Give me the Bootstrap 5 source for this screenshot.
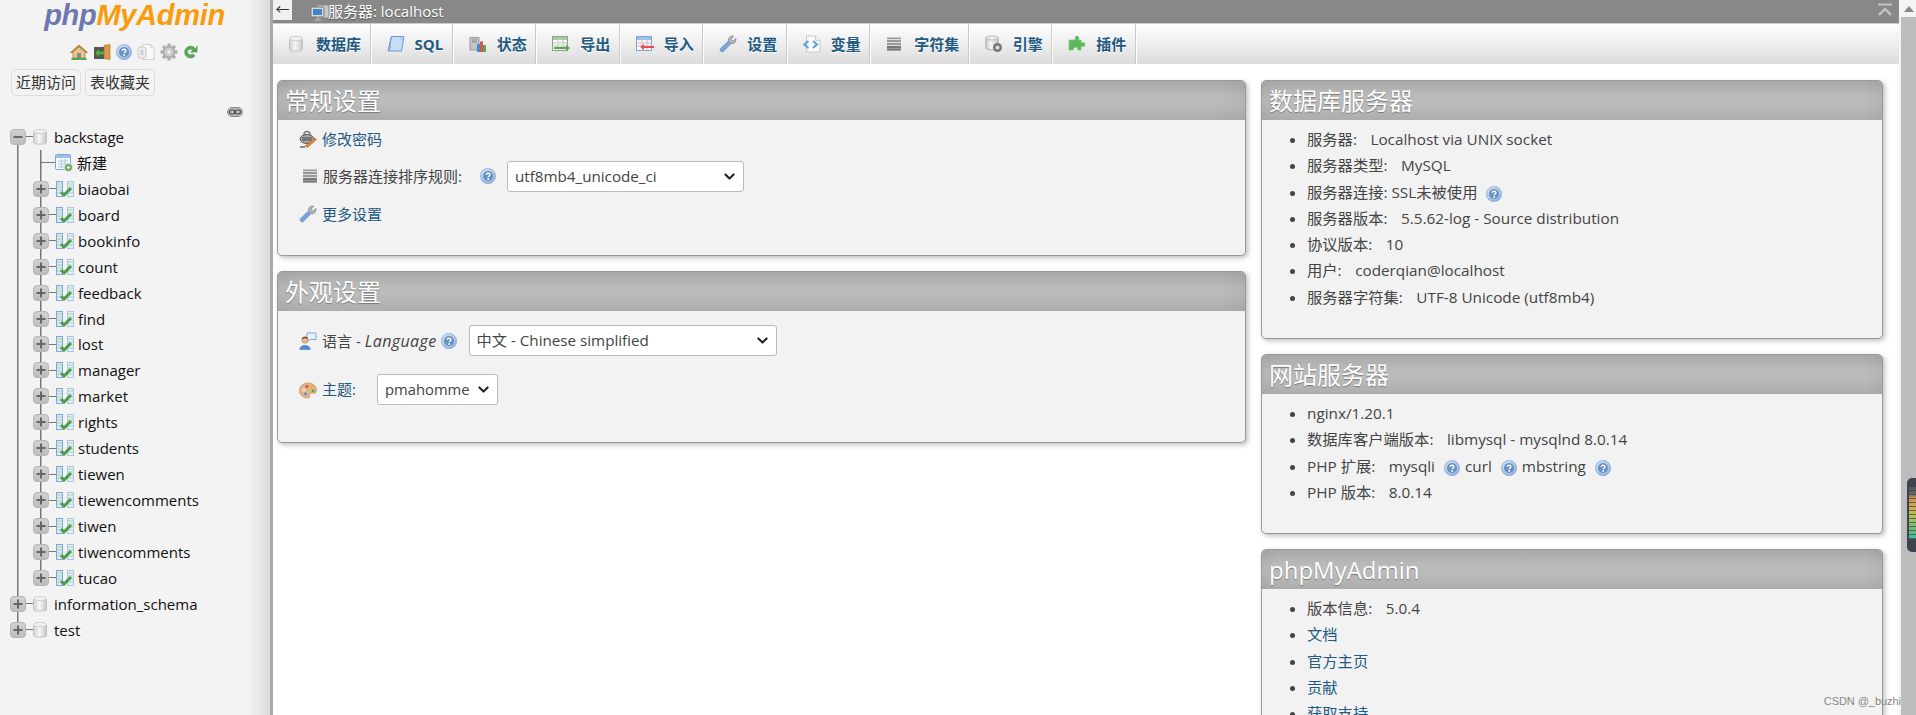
<!DOCTYPE html>
<html lang="zh-CN">
<head>
<meta charset="utf-8">
<title>phpMyAdmin</title>
<link href="https://cdn.jsdelivr.net/npm/bootstrap@5.3.0/dist/css/bootstrap.min.css" rel="stylesheet">
<style>
html,body{height:715px;overflow:hidden}
body{font-family:"Open Sans","Noto Sans CJK SC",sans-serif;font-size:15px;color:#444;background:#fff}
a{color:#235a81;text-decoration:none}
svg{flex:none;display:block}
.pma-shell{height:715px}
.pma-side{width:273px;flex:none;background:linear-gradient(90deg,#f3f3f3 0,#f3f3f3 248px,#dcdcdc 270px,#aaa 270px,#aaa 273px);height:715px;overflow:hidden}
.pma-logo{font-family:"Liberation Sans",sans-serif;font-weight:700;font-style:italic;font-size:29px;line-height:29px;height:41px;padding-top:1px;letter-spacing:-.3px;text-align:center;padding-right:4px}
.pma-logo .php{color:#6c78af}
.pma-logo .my{color:#f89c0e}
.pma-nav-ic{height:21px;gap:5px;padding-right:5px}
.pma-quick{padding:7px 0 0 11px;gap:4px}
.pma-quick .btn{font-size:15px;line-height:24px;padding:0 4px;border:1px solid #ddd;border-radius:5px;color:#333;background:#f3f3f3;height:27px}
.pma-linkrow{height:18px;margin-top:7px;padding-left:227px}
.pma-tree{margin-top:3px;list-style:none;padding:0;font-size:15px;color:#111;background:linear-gradient(#777,#777) 17px 13px/1.5px calc(100% - 26px) no-repeat}
.pma-sub{list-style:none;padding:0;margin:0;background:linear-gradient(#777,#777) 40px 0/1.5px calc(100% - 13px) no-repeat}
.pma-row{height:25.95px;display:flex;align-items:center;padding-left:10px;line-height:26px}
.pma-row.kid{padding-left:33px}
.pma-row.fresh{padding-left:41px}
.pma-dash{height:1px;width:7px;background:#777;flex:none}
.pma-row.fresh .pma-dash{width:14px}
.pma-row .pma-name{margin-left:7px}
.pma-row.kid .pma-name,.pma-row.fresh .pma-name{margin-left:4px}
.pma-main{flex:1 1 auto;min-width:0;height:715px;overflow:hidden}
.pma-crumb{height:24px;background:#888;border-bottom:1px solid #ccc;color:#fff;font-size:15px;line-height:23px;text-shadow:0 1px 1px rgba(0,0,0,.35);position:relative}
.pma-back{width:19px;height:20px;background:#f1f1f1;color:#333;font-size:14px;line-height:17px;text-align:center;text-shadow:none;margin-right:18px}
.pma-crumb .srv{margin-right:-2px}
.pma-collapse{margin-left:auto;margin-right:7px;margin-top:3px}
.pma-tabs{height:40px;background:linear-gradient(#fff,#dcdcdc);list-style:none;padding:0;margin:0}
.pma-tabs li{border-right:1px solid #fff;box-shadow:inset -1px 0 0 #c9c9c9;padding:0 9.5px 0 15px;display:flex;align-items:center;gap:10px;font-weight:700;font-size:15px;color:#235a81;text-shadow:0 1px 0 #fff;height:40px}
.pma-tabs li.narrow{gap:12px}
.pma-tabs li span{white-space:nowrap}
.pma-content{padding:16px 16px 0 4px;gap:15px}
.pma-left{width:969px;flex:none}
.pma-right{width:622px;flex:none}
.pma-panel{background:#f2f2f2;border:1px solid #999;border-radius:5px;box-shadow:2px 2px 5px rgba(0,0,0,.25);margin-bottom:15px;overflow:hidden}
.pma-panel h2{height:39px;margin:0;padding:0 7px;background:linear-gradient(90deg,rgba(0,0,0,.04),transparent 3%,transparent 97%,rgba(0,0,0,.04)),linear-gradient(#a9a9a9,#bbb 40%,#bbb 60%,#adadad);color:#fff;font-size:24px;font-weight:400;line-height:40px;text-shadow:0 1px 1px #777;white-space:nowrap}
.pma-h1{height:176px}
.pma-h2{height:172px}
.pma-h3{height:259px}
.pma-h4{height:180px}
.pma-h5{height:300px}
.pma-line{display:flex;align-items:center;padding-left:21px}
.pma-line>svg{margin-right:5px}
.pma-line em{font-size:16px;letter-spacing:.4px}
.pma-r38{height:38px}
.pma-r36{height:36px}
.pma-r40{height:40px}
.pma-r59{height:59px}
.pma-r39{height:39px}
.pma-line>svg.pma-lead{margin-left:3px}
.pma-line>svg.pma-h-a{margin:0 11px 0 18px}
.pma-line>svg.pma-h-b{margin:0 12px 0 4px}
.form-select.pma-sel{font-size:15.2px;height:31px;line-height:1.2;padding:4px 28px 4px 7px;color:#444;border:1px solid #bbb;border-radius:3px;background-position:right 7px center;background-size:13px 11px;background-color:#fff;font-family:inherit;background-image:url("data:image/svg+xml,%3csvg xmlns='http://www.w3.org/2000/svg' viewBox='0 0 16 16'%3e%3cpath fill='none' stroke='%23222' stroke-linecap='round' stroke-linejoin='round' stroke-width='3' d='m2 5 6 6 6-6'/%3e%3c/svg%3e")}
.pma-w-a{width:237px}
.pma-w-b{width:308px}
.form-select.pma-sel.pma-w-c{width:121px;margin-left:21px;padding-right:18px;font-size:14.8px}
.pma-list{margin:0;padding:6px 0 0 45px;font-size:15.3px;line-height:26.3px;color:#444;list-style:disc}
.pma-list li{height:26.3px;white-space:nowrap}
.pma-list .hlp{display:inline-block;vertical-align:-4px;margin:0 5px 0 9px}
.pma-sp{margin-left:13.5px}
.pma-scroll{width:17px;flex:none;height:715px;background:#f4f4f4;position:relative;padding-left:2px}
.pma-thumb{height:698px;background:#bdbdbd}
.pma-arrow{height:17px;display:flex;align-items:center;justify-content:center}
.pma-stripe{position:absolute;left:8px;top:478px;width:9px;height:74px;border-radius:5px 0 0 5px;background:#3d4450;padding:9px 0 0 2px}
.pma-stripe i{display:block;height:52px;background:repeating-linear-gradient(transparent 0,transparent 3px,rgba(61,68,80,.7) 3px,rgba(61,68,80,.7) 4px),linear-gradient(#555 0,#666 14%,#c9924a 20%,#cda94c 38%,#b7c24c 55%,#7dbd68 75%,#3cc2a2 100%)}
.pma-mark{position:absolute;right:15px;bottom:6px;color:#888;font-size:11px;line-height:16px;font-family:"Liberation Sans",sans-serif;letter-spacing:-.05px}
</style>
</head>
<body>
<svg width="0" height="0" class="position-absolute">
<defs>
<linearGradient id="gdb" x1="0" x2="1" y1="0" y2="0"><stop offset="0" stop-color="#cfcfcf"/><stop offset=".45" stop-color="#f6f6f6"/><stop offset="1" stop-color="#c4c4c4"/></linearGradient>
<radialGradient id="ghelp" cx=".4" cy=".35" r=".75"><stop offset="0" stop-color="#dce8f6"/><stop offset=".7" stop-color="#a3c0e2"/><stop offset="1" stop-color="#7ea3d0"/></radialGradient>
<linearGradient id="gexp" x1="0" x2="0" y1="0" y2="1"><stop offset="0" stop-color="#d2d2d2"/><stop offset="1" stop-color="#bdbdbd"/></linearGradient>
<symbol id="i-db" viewBox="1 1 14 16"><path d="M1.500 3.500C1.500 1.500 14.500 1.500 14.500 3.500V14.500C14.500 16.700 1.500 16.700 1.500 14.500Z" fill="url(#gdb)" stroke="#c4c4c4"/><ellipse cx="8" cy="3.500" rx="6.500" ry="2" fill="#f2f2f2" stroke="#d2d2d2"/></symbol>
<symbol id="i-plus" viewBox="0 0 16 16"><rect x=".5" y=".5" width="15" height="15" rx="3.500" fill="url(#gexp)" stroke="#b5b5b5"/><path d="M3.500 8h9M8 3.500v9" stroke="#666" stroke-width="2"/></symbol>
<symbol id="i-minus" viewBox="0 0 16 16"><rect x=".5" y=".5" width="15" height="15" rx="3.500" fill="url(#gexp)" stroke="#b5b5b5"/><path d="M3.500 8h9" stroke="#666" stroke-width="2"/></symbol>
<symbol id="i-tbl" viewBox="0 0 18 16"><rect x=".5" y=".5" width="6" height="15" fill="#dce9f7" stroke="#7ea6d6"/><rect x="11.500" y=".5" width="6" height="15" fill="#e6f0fa" stroke="#a9c6e6"/><path d="M1 3h5M1 6h5M1 9h5M1 12h5M12 3h5M12 6h5M12 9h5M12 12h5" stroke="#a8d3a8"/><path d="M5 11l3 3 7-7" fill="none" stroke="#4c9a4c" stroke-width="3"/></symbol>
<symbol id="i-new" viewBox="0 0 18 18"><rect x=".5" y=".5" width="15" height="15" rx="1" fill="#f4f8fc" stroke="#7ea6d6"/><rect x="1" y="1" width="14" height="3" fill="#9fc0e4"/><path d="M3 7h10M3 10h10M3 13h10M6.500 5v9M10 5v9" stroke="#b6c9de"/><circle cx="13.500" cy="13.500" r="4" fill="#5a9e4a" stroke="#fff" stroke-width=".7"/><path d="M11.500 13.500h4M13.500 11.500v4" stroke="#dff3d8" stroke-width="1.300"/></symbol>
<symbol id="i-help" viewBox="0 0 16 16"><circle cx="8" cy="8" r="7.700" fill="url(#ghelp)" stroke="#7ea3d0" stroke-width=".5"/><circle cx="8" cy="8" r="5" fill="#6690c8"/><path d="M6.200 6.700C6.300 4.800 9.900 4.800 9.900 6.800 9.900 8 8.200 8 8.200 9.300" fill="none" stroke="#fff" stroke-width="1.400"/><circle cx="8.200" cy="11" r=".9" fill="#fff"/></symbol>
<symbol id="i-home" viewBox="0 0 18 16"><path d="M9 1L.5 8.500H3V14H15V8.500H17.500Z" fill="#e9c88f" stroke="#a07840" stroke-width=".8"/><path d="M9 1L.5 8.500H3L9 3.500 15 8.500H17.500Z" fill="#b98a4c"/><rect x="7" y="9" width="4" height="5" fill="#8a8a8a"/><path d="M1.500 15h15" stroke="#58a548" stroke-width="2"/></symbol>
<symbol id="i-exit" viewBox="0 0 18 16"><rect x="1" y="3" width="10" height="12" fill="#555"/><path d="M11 1.500L17 .5V15.500L11 14.500Z" fill="#d99a4a" stroke="#a46a24" stroke-width=".6"/><path d="M2 9l4-4v2.500h5v3H6V13Z" fill="#58b048" stroke="#3d8a33" stroke-width=".5"/></symbol>
<symbol id="i-doc" viewBox="0 0 18 18"><path d="M5.500 1.500h8l3.500 3.500v11.500h-11.500Z" fill="#fafafa" stroke="#d0d0d0"/><path d="M13.500 1.500V5H17" fill="#eee" stroke="#d0d0d0"/><rect x="1" y="4" width="8" height="11" rx="2" fill="#eee" stroke="#c8c8c8"/><rect x="3.500" y="7" width="3" height="5" fill="#ccc"/></symbol>
<symbol id="i-gear" viewBox="0 0 18 18"><g fill="#aeaeae"><circle cx="9" cy="9" r="6.300"/><rect x="7.300" y=".5" width="3.400" height="17" rx=".6"/><rect x="7.300" y=".5" width="3.400" height="17" rx=".6" transform="rotate(45 9 9)"/><rect x="7.300" y=".5" width="3.400" height="17" rx=".6" transform="rotate(90 9 9)"/><rect x="7.300" y=".5" width="3.400" height="17" rx=".6" transform="rotate(135 9 9)"/></g><circle cx="9" cy="9" r="4.300" fill="#d4d4d4"/><circle cx="9" cy="9" r="2.300" fill="#f3f3f3" stroke="#aaa" stroke-width=".6"/></symbol>
<symbol id="i-reload" viewBox="0 0 16 16"><path d="M13.500 5A6.300 6.300 0 1 0 13 12L10 10A3 3 0 1 1 10.500 6.500L8 8H15V1.500Z" fill="#58ac58" stroke="#3d8c3d" stroke-width=".6"/></symbol>
<symbol id="i-chain" viewBox="0 0 16 10"><rect x=".5" y=".5" width="15" height="9" rx="4.500" fill="#bbb" stroke="#888"/><rect x="2.500" y="3" width="5.500" height="4" rx="2" fill="none" stroke="#444" stroke-width="1.200"/><rect x="8" y="3" width="5.500" height="4" rx="2" fill="none" stroke="#444" stroke-width="1.200"/></symbol>
<symbol id="i-srv" viewBox="0 0 20 18"><rect x="7" y="1" width="12" height="13" rx="1" fill="#c8c8c8" stroke="#8a8a8a"/><rect x="1" y="3" width="13" height="10" rx="1" fill="#d8d8d8" stroke="#777"/><rect x="3" y="5" width="9" height="6" fill="#3f86c8"/><path d="M5 16h6M8 13v3" stroke="#aaa" stroke-width="2"/></symbol>
<symbol id="i-sql" viewBox="0 0 18 18"><path d="M4.500 1.500H17L14.500 16H1Z" fill="#c8dcf3" stroke="#6c9bd2"/><path d="M4.500 1.500C3 5 3 9 3 13.500 2.800 15 1.500 15 1 16" fill="none" stroke="#6c9bd2"/><path d="M14.500 1.500C13 3 14.500 4 16.200 4" fill="#fff" stroke="#6c9bd2"/></symbol>
<symbol id="i-stat" viewBox="0 0 18 18"><path d="M1 2.500h9v12.500H1Z" fill="#c4c4c4" stroke="#999"/><path d="M3 5h5M3 7h5" stroke="#888"/><rect x="8" y="9" width="3" height="8" fill="#4c84d0"/><rect x="11" y="6.500" width="3" height="10.500" fill="#d9534f"/><rect x="14" y="10" width="3" height="7" fill="#5aa84c"/></symbol>
<symbol id="i-exp" viewBox="0 0 18 18"><rect x=".5" y="1.500" width="15" height="14" fill="#f4f8f4" stroke="#9a9a9a"/><rect x="1" y="2" width="14" height="3" fill="#a9cfa0"/><path d="M1 8h14M1 11h14M6 5v10M11 5v10" stroke="#bcd0bc"/><path d="M2 12h12V10l4 3-4 3v-2H2Z" fill="#5da54a"/></symbol>
<symbol id="i-imp" viewBox="0 0 18 18"><rect x=".5" y="1.500" width="15" height="14" fill="#fbf6f6" stroke="#7ea6d6"/><rect x="1" y="2" width="14" height="3" fill="#9fc0e4"/><path d="M1 8h14M1 11h14M6 5v10M11 5v10" stroke="#cfc0c0"/><path d="M18 11H8V9L4 12l4 3v-2h10Z" fill="#e25050"/></symbol>
<symbol id="i-wrench" viewBox="0 0 18 18"><path d="M1.200 13.800L9.600 5.800C9 3 11.500.3 14.700 1.200L12 4.200 13.800 6.200 16.800 3.500C17.500 6.800 15 9.200 12.200 8.600L4.200 16.800C2.700 17.800.3 15.500 1.200 13.800Z" fill="#7ba4dc" stroke="#5f86bd" stroke-width=".5"/><path d="M9.600 5.800C9 3 11.500.3 14.700 1.200L12 4.200 13.800 6.200 16.800 3.500C17.500 6.800 15 9.200 12.200 8.600Z" fill="#b5b5b5" stroke="#8c8c8c" stroke-width=".5"/></symbol>
<symbol id="i-var" viewBox="0 0 18 18"><path d="M3.500 1h9L17 5.500V17H3.500Z" fill="#fafafa" stroke="#c8c8c8"/><path d="M12.500 1v4.500H17" fill="#eee" stroke="#c8c8c8"/><path d="M5.500 6L1.500 9.500 5.500 13" fill="none" stroke="#5aa2ea" stroke-width="2.200"/><path d="M10 6l4 3.500-4 3.500" fill="none" stroke="#5aa2ea" stroke-width="2.200"/></symbol>
<symbol id="i-lines" viewBox="0 0 16 16"><rect x="1" y="1.500" width="14" height="13" fill="#999"/><path d="M1 3.500h14M1 6.500h14M1 9.500h14M1 12.500h14" stroke="#f0f0f0" stroke-width=".8"/><rect x="1" y="10" width="14" height="4.500" fill="#555" opacity=".5"/></symbol>
<symbol id="i-eng" viewBox="0 0 18 18"><path d="M1 3C1 .8 13 .8 13 3V13C13 15.500 1 15.500 1 13Z" fill="url(#gdb)" stroke="#aaa"/><ellipse cx="7" cy="3" rx="6" ry="2" fill="#eee" stroke="#bbb"/><circle cx="12.500" cy="12.500" r="4.500" fill="#777"/><circle cx="12.500" cy="12.500" r="2" fill="#ddd"/></symbol>
<symbol id="i-plug" viewBox="0 0 18 18"><path d="M5 5h2.500C6.500 2.500 7.500 1 9 1s2.500 1.500 1.500 4H13v2.800c2-.8 4-.2 4 1.700s-2 2.500-4 1.700V15H9.500c.7-1.800-.5-2.800-2-2.800S4.800 13.200 5.500 15H1V5Z" fill="#5cb85c" stroke="#7cc77c" stroke-width=".7"/></symbol>
<symbol id="i-lock" viewBox="0 0 18 18"><ellipse cx="8" cy="9" rx="7" ry="4.500" fill="#aaa" stroke="#555"/><path d="M5 6V4.500a3 3 0 0 1 6 0V6" fill="none" stroke="#777" stroke-width="1.500"/><rect x="3" y="7" width="10" height="4" fill="#777"/><path d="M6 16l10-8 1.500 1.500-9 8z" fill="#e08a3c" stroke="#a5561a" stroke-width=".5"/><path d="M1 17h5" stroke="#222"/></symbol>
<symbol id="i-lang" viewBox="0 0 18 18"><path d="M8 1h9v6.500H11L8.500 10V7.500H8Z" fill="#e8f2fc" stroke="#7ea6d6"/><circle cx="6" cy="8" r="3.200" fill="#e6b98c" stroke="#9a6a3c" stroke-width=".5"/><path d="M3 7c0-3 6-3 6 0-2-1-4-1-6 0Z" fill="#7a4d24"/><path d="M.8 17.500c0-5.500 10.400-5.500 10.400 0Z" fill="#4f8ad2" stroke="#3b6ea8" stroke-width=".5"/></symbol>
<symbol id="i-pal" viewBox="0 0 18 18"><path d="M9 2C4 2 .5 5.500.5 9.500S4 17 8.500 17c2 0 2.500-1.200 2-2.500s.3-2.200 2-2.200h2.500c1.700 0 2.500-1.200 2.500-3C17.500 5 14 2 9 2Z" fill="#e3b687" stroke="#b48355" stroke-width=".6"/><circle cx="5" cy="9" r="1.500" fill="#f3ead8"/><circle cx="8" cy="5.500" r="1.700" fill="#e05a4c"/><circle cx="12.500" cy="6" r="1.700" fill="#e8b33c"/><circle cx="14" cy="9.800" r="1.500" fill="#53a56a"/><circle cx="6.500" cy="13" r="1.400" fill="#4f8ad2"/></symbol>
</defs>
</svg>

<div class="pma-shell d-flex">
  <aside class="pma-side">
    <div class="pma-logo"><span class="php">php</span><span class="my">MyAdmin</span></div>
    <div class="pma-nav-ic d-flex justify-content-center align-items-center">
      <svg width="18" height="16"><use href="#i-home"/></svg>
      <svg width="18" height="16"><use href="#i-exit"/></svg>
      <svg width="16" height="16"><use href="#i-help"/></svg>
      <svg width="18" height="18"><use href="#i-doc"/></svg>
      <svg width="18" height="18"><use href="#i-gear"/></svg>
      <svg width="15" height="16"><use href="#i-reload"/></svg>
    </div>
    <div class="pma-quick d-flex">
      <a class="btn" href="#">近期访问</a>
      <a class="btn" href="#">表收藏夹</a>
    </div>
    <div class="pma-linkrow d-flex align-items-center"><svg width="16" height="10"><use href="#i-chain"/></svg></div>
    <ul class="pma-tree">
      <li>
        <div class="pma-row"><svg width="16" height="16"><use href="#i-minus"/></svg><span class="pma-dash"></span><svg width="14" height="16"><use href="#i-db"/></svg><span class="pma-name">backstage</span></div>
        <ul class="pma-sub">
          <li class="pma-row fresh"><span class="pma-dash"></span><svg width="18" height="18"><use href="#i-new"/></svg><span class="pma-name">新建</span></li>
          <li class="pma-row kid"><svg width="16" height="16"><use href="#i-plus"/></svg><span class="pma-dash"></span><svg width="18" height="16"><use href="#i-tbl"/></svg><span class="pma-name">biaobai</span></li>
          <li class="pma-row kid"><svg width="16" height="16"><use href="#i-plus"/></svg><span class="pma-dash"></span><svg width="18" height="16"><use href="#i-tbl"/></svg><span class="pma-name">board</span></li>
          <li class="pma-row kid"><svg width="16" height="16"><use href="#i-plus"/></svg><span class="pma-dash"></span><svg width="18" height="16"><use href="#i-tbl"/></svg><span class="pma-name">bookinfo</span></li>
          <li class="pma-row kid"><svg width="16" height="16"><use href="#i-plus"/></svg><span class="pma-dash"></span><svg width="18" height="16"><use href="#i-tbl"/></svg><span class="pma-name">count</span></li>
          <li class="pma-row kid"><svg width="16" height="16"><use href="#i-plus"/></svg><span class="pma-dash"></span><svg width="18" height="16"><use href="#i-tbl"/></svg><span class="pma-name">feedback</span></li>
          <li class="pma-row kid"><svg width="16" height="16"><use href="#i-plus"/></svg><span class="pma-dash"></span><svg width="18" height="16"><use href="#i-tbl"/></svg><span class="pma-name">find</span></li>
          <li class="pma-row kid"><svg width="16" height="16"><use href="#i-plus"/></svg><span class="pma-dash"></span><svg width="18" height="16"><use href="#i-tbl"/></svg><span class="pma-name">lost</span></li>
          <li class="pma-row kid"><svg width="16" height="16"><use href="#i-plus"/></svg><span class="pma-dash"></span><svg width="18" height="16"><use href="#i-tbl"/></svg><span class="pma-name">manager</span></li>
          <li class="pma-row kid"><svg width="16" height="16"><use href="#i-plus"/></svg><span class="pma-dash"></span><svg width="18" height="16"><use href="#i-tbl"/></svg><span class="pma-name">market</span></li>
          <li class="pma-row kid"><svg width="16" height="16"><use href="#i-plus"/></svg><span class="pma-dash"></span><svg width="18" height="16"><use href="#i-tbl"/></svg><span class="pma-name">rights</span></li>
          <li class="pma-row kid"><svg width="16" height="16"><use href="#i-plus"/></svg><span class="pma-dash"></span><svg width="18" height="16"><use href="#i-tbl"/></svg><span class="pma-name">students</span></li>
          <li class="pma-row kid"><svg width="16" height="16"><use href="#i-plus"/></svg><span class="pma-dash"></span><svg width="18" height="16"><use href="#i-tbl"/></svg><span class="pma-name">tiewen</span></li>
          <li class="pma-row kid"><svg width="16" height="16"><use href="#i-plus"/></svg><span class="pma-dash"></span><svg width="18" height="16"><use href="#i-tbl"/></svg><span class="pma-name">tiewencomments</span></li>
          <li class="pma-row kid"><svg width="16" height="16"><use href="#i-plus"/></svg><span class="pma-dash"></span><svg width="18" height="16"><use href="#i-tbl"/></svg><span class="pma-name">tiwen</span></li>
          <li class="pma-row kid"><svg width="16" height="16"><use href="#i-plus"/></svg><span class="pma-dash"></span><svg width="18" height="16"><use href="#i-tbl"/></svg><span class="pma-name">tiwencomments</span></li>
          <li class="pma-row kid"><svg width="16" height="16"><use href="#i-plus"/></svg><span class="pma-dash"></span><svg width="18" height="16"><use href="#i-tbl"/></svg><span class="pma-name">tucao</span></li>
        </ul>
      </li>
      <li class="pma-row"><svg width="16" height="16"><use href="#i-plus"/></svg><span class="pma-dash"></span><svg width="14" height="16"><use href="#i-db"/></svg><span class="pma-name">information_schema</span></li>
      <li class="pma-row"><svg width="16" height="16"><use href="#i-plus"/></svg><span class="pma-dash"></span><svg width="14" height="16"><use href="#i-db"/></svg><span class="pma-name">test</span></li>
    </ul>
  </aside>

  <main class="pma-main">
    <div class="pma-crumb d-flex">
      <div class="pma-back">←</div>
      <svg class="srv mt-1" width="20" height="18"><use href="#i-srv"/></svg>
      <span>服务器: localhost</span>
      <svg class="pma-collapse" width="14" height="14" viewBox="0 0 14 14"><path d="M0 1.500h14" stroke="#c4c4c4" stroke-width="2"/><path d="M1 12l6-6 6 6" fill="none" stroke="#c4c4c4" stroke-width="2.400"/></svg>
    </div>
    <ul class="pma-tabs d-flex">
      <li class="narrow"><svg width="16" height="16"><use href="#i-db"/></svg><span>数据库</span></li>
      <li><svg width="18" height="18"><use href="#i-sql"/></svg><span>SQL</span></li>
      <li><svg width="18" height="18"><use href="#i-stat"/></svg><span>状态</span></li>
      <li><svg width="18" height="18"><use href="#i-exp"/></svg><span>导出</span></li>
      <li><svg width="18" height="18"><use href="#i-imp"/></svg><span>导入</span></li>
      <li><svg width="18" height="18"><use href="#i-wrench"/></svg><span>设置</span></li>
      <li><svg width="18" height="18"><use href="#i-var"/></svg><span>变量</span></li>
      <li class="narrow"><svg width="16" height="16"><use href="#i-lines"/></svg><span>字符集</span></li>
      <li><svg width="18" height="18"><use href="#i-eng"/></svg><span>引擎</span></li>
      <li><svg width="18" height="18"><use href="#i-plug"/></svg><span>插件</span></li>
    </ul>

    <div class="pma-content d-flex align-items-start">
      <div class="pma-left">
        <section class="pma-panel pma-h1">
          <h2>常规设置</h2>
          <div class="pma-line pma-r38"><svg width="18" height="18"><use href="#i-lock"/></svg><a href="#">修改密码</a></div>
          <div class="pma-line pma-r36"><svg width="16" height="16" class="pma-lead"><use href="#i-lines"/></svg><span>服务器连接排序规则:</span><svg width="16" height="16" class="pma-h-a"><use href="#i-help"/></svg>
            <select class="form-select pma-sel pma-w-a" aria-label="collation"><option>utf8mb4_unicode_ci</option></select></div>
          <div class="pma-line pma-r40"><svg width="18" height="18"><use href="#i-wrench"/></svg><a href="#">更多设置</a></div>
        </section>
        <section class="pma-panel pma-h2">
          <h2>外观设置</h2>
          <div class="pma-line pma-r59"><svg width="18" height="18"><use href="#i-lang"/></svg><span>语言 - <em>Language</em></span><svg width="16" height="16" class="pma-h-b"><use href="#i-help"/></svg>
            <select class="form-select pma-sel pma-w-b" aria-label="language"><option>中文 - Chinese simplified</option></select></div>
          <div class="pma-line pma-r39"><svg width="18" height="18"><use href="#i-pal"/></svg><a href="#">主题:</a>
            <select class="form-select pma-sel pma-w-c" aria-label="theme"><option>pmahomme</option></select></div>
        </section>
      </div>
      <div class="pma-right">
        <section class="pma-panel pma-h3">
          <h2>数据库服务器</h2>
          <ul class="pma-list">
            <li>服务器:<span class="pma-sp">Localhost via UNIX socket</span></li>
            <li>服务器类型:<span class="pma-sp">MySQL</span></li>
            <li>服务器连接: SSL未被使用<svg class="hlp" width="16" height="16"><use href="#i-help"/></svg></li>
            <li>服务器版本:<span class="pma-sp">5.5.62-log - Source distribution</span></li>
            <li>协议版本:<span class="pma-sp">10</span></li>
            <li>用户:<span class="pma-sp">coderqian@localhost</span></li>
            <li>服务器字符集:<span class="pma-sp">UTF-8 Unicode (utf8mb4)</span></li>
          </ul>
        </section>
        <section class="pma-panel pma-h4">
          <h2>网站服务器</h2>
          <ul class="pma-list">
            <li>nginx/1.20.1</li>
            <li>数据库客户端版本:<span class="pma-sp">libmysql - mysqlnd 8.0.14</span></li>
            <li>PHP 扩展:<span class="pma-sp">mysqli</span><svg class="hlp" width="16" height="16"><use href="#i-help"/></svg>curl<svg class="hlp" width="16" height="16"><use href="#i-help"/></svg>mbstring<svg class="hlp" width="16" height="16"><use href="#i-help"/></svg></li>
            <li>PHP 版本:<span class="pma-sp">8.0.14</span></li>
          </ul>
        </section>
        <section class="pma-panel pma-h5">
          <h2>phpMyAdmin</h2>
          <ul class="pma-list">
            <li>版本信息:<span class="pma-sp">5.0.4</span></li>
            <li><a href="#">文档</a></li>
            <li><a href="#">官方主页</a></li>
            <li><a href="#">贡献</a></li>
            <li><a href="#">获取支持</a></li>
          </ul>
        </section>
      </div>
    </div>
  </main>

  <div class="pma-scroll">
    <div class="pma-arrow"><svg width="10" height="6" viewBox="0 0 10 6"><path d="M5 0l5 6H0Z" fill="#888"/></svg></div>
    <div class="pma-thumb"></div>
    <div class="pma-stripe"><i></i></div>
  </div>
</div>
<div class="pma-mark">CSDN @_buzhi</div>
<script src="https://cdn.jsdelivr.net/npm/bootstrap@5.3.0/dist/js/bootstrap.bundle.min.js"></script>
</body>
</html>
